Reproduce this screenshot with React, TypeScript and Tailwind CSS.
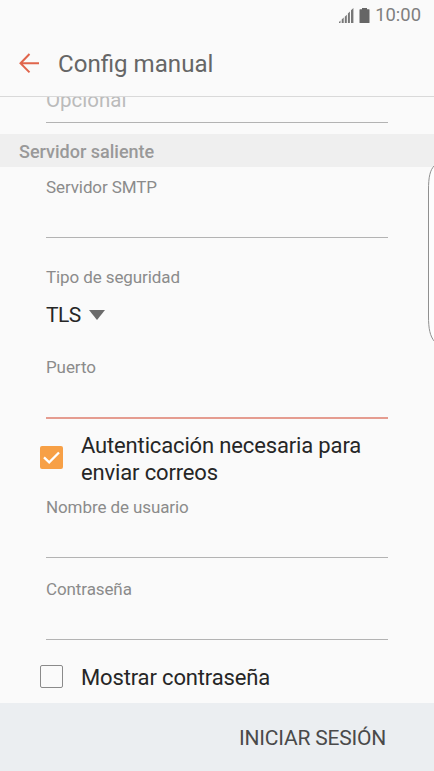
import type { ReactNode } from "react";

function StatusBar() {
  return (
    <div className="flex h-[30px] items-center justify-end pr-[13px] text-[#7f7f7f]">
      <svg width="15" height="15" viewBox="0 0 15 15" fill="#777">
        <path d="M0 15v-1l1.500-1.500V15zM2.700 15v-3.500l2-2V15zM5.800 15V8.700l2-2V15zM8.900 15V5.500l2-2V15zM12 15V2.200L14.400 0v15z" />
      </svg>
      <svg className="ml-[5px]" width="11" height="15" viewBox="0 0 11 15" fill="#666">
        <path d="M3 0h5v1.300h2a.5.5 0 0 1 .5.5v12.700a.5.5 0 0 1-.5.5H1a.5.5 0 0 1-.5-.5V1.800a.5.5 0 0 1 .5-.5h2z" />
      </svg>
      <span className="ml-[5px] text-[18.400px] leading-[30px]">10:00</span>
    </div>
  );
}

function Header() {
  return (
    <header className="h-[97px] shrink-0 border-b border-[#d9d9d9] bg-[#fafafa]">
      <StatusBar />
      <div className="flex h-[66px] items-center pl-[19px]">
        <svg width="21" height="21" viewBox="0 0 21 21" fill="none" stroke="#e0654c" strokeWidth="2">
          <path d="M10.500 1 1.500 10.200l9 9.200M1.500 10.200H20" />
        </svg>
        <h1 className="ml-[18px] pt-[2px] text-[24.100px] leading-[32px] text-[#666]">Config manual</h1>
      </div>
    </header>
  );
}

function Field({ label, active = false }: { label: string; active?: boolean }) {
  return (
    <div
      className={
        active
          ? "h-[62px] border-b-2 border-[#e59c90]"
          : "h-[61px] border-b border-[#b3b3b3]"
      }
    >
      <label className="block text-[17px] leading-[20px] tracking-[-0.1px] text-[#8b8b8b]">{label}</label>
    </div>
  );
}

function CheckRow({ checked = false, children }: { checked?: boolean; children: ReactNode }) {
  return (
    <div className="-ml-[6px] flex items-center">
      {checked ? (
        <span className="mb-[3px] flex h-[23px] w-[23px] shrink-0 items-center justify-center rounded-[2px] bg-[#f7a046]">
          <svg width="17" height="13" viewBox="0 0 17 13" fill="none" stroke="#fff" strokeWidth="2.300">
            <path d="M1 6.300 6.200 11.300 16 1.500" />
          </svg>
        </span>
      ) : (
        <span className="mb-[2px] h-[23px] w-[23px] shrink-0 rounded-[2px] border border-[#8a8a8a]" />
      )}
      <span className="ml-[18px] text-[22px] leading-[27px] tracking-[-0.15px] text-[#262626]">{children}</span>
    </div>
  );
}

export default function App() {
  return (
    <div className="relative flex h-[771px] w-[434px] flex-col overflow-hidden bg-[#fafafa] font-['Roboto',sans-serif]">
      <Header />

      <main className="h-[606px] shrink-0 overflow-hidden">
        <div className="-mt-[9px] mr-[46px] ml-[46px] h-[35px] border-b border-[#b3b3b3] text-[20.500px] leading-[24px] text-[#bbb]">
          Opcional
        </div>

        <h2 className="mt-[11px] h-[33px] bg-[#efefef] pl-[19px] text-[18px] leading-[36px] font-medium text-[#999]">
          Servidor saliente
        </h2>

        <div className="mx-[46px] pt-[10px]">
          <Field label="Servidor SMTP" />

          <div className="mt-[29px] text-[17px] leading-[20px] tracking-[-0.1px] text-[#8b8b8b]">
            Tipo de seguridad
          </div>
          <div className="mt-[15px] mb-[31px] flex h-6 items-center">
            <span className="pt-px text-[21px] leading-[24px] tracking-[-0.5px] text-[#262626]">TLS</span>
            <svg className="mt-[2px] ml-2" width="16" height="10" viewBox="0 0 16 10" fill="#6b6b6b">
              <path d="M0 0h16L8 10z" />
            </svg>
          </div>

          <Field label="Puerto" active />

          <div className="mt-[13px] mb-[11px]">
            <CheckRow checked>
              Autenticación necesaria para
              <br />
              enviar correos
            </CheckRow>
          </div>

          <Field label="Nombre de usuario" />
          <div className="mt-[21px] mb-[24px]">
            <Field label="Contraseña" />
          </div>

          <CheckRow>Mostrar contraseña</CheckRow>
        </div>
      </main>

      <footer className="flex grow items-center justify-end bg-[#ebeef1] pr-[48px]">
        <button className="pt-[2px] text-[21px] leading-[28px] tracking-[-0.2px] text-[#4a4a4a]">
          INICIAR SESIÓN
        </button>
      </footer>

      {/* edge panel handle */}
      <svg className="absolute top-[164px] right-0" width="6" height="180" viewBox="0 0 6 180" fill="#fdfdfd" stroke="#8f8f8f">
        <path d="M6.500 1.500C2 6 .5 13 .5 26v126c0 13 1.500 20 6 25.500" />
      </svg>
    </div>
  );
}
